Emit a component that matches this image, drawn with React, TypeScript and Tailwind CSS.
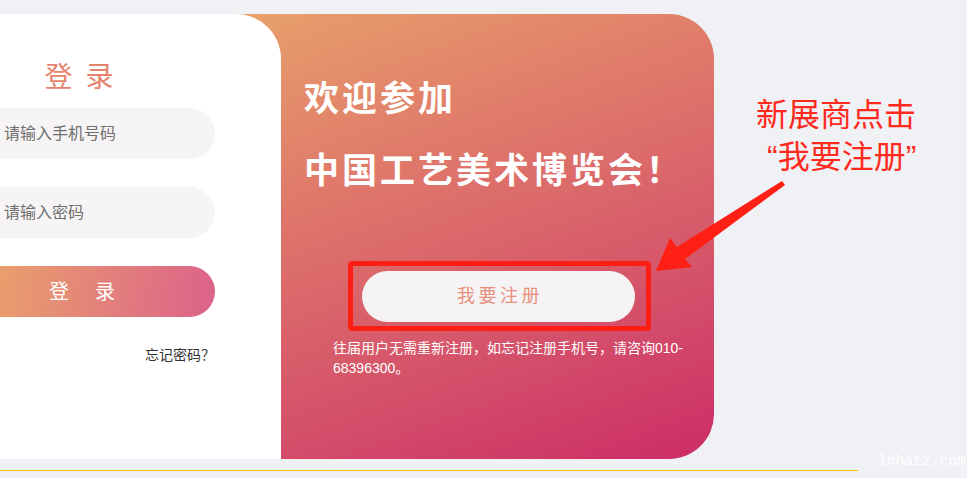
import React from "react";

const LoginForm = () => {
  return (
    <div className="-ml-[51px] w-[266px] pt-[50px]">
      <div className="flex h-[28px] items-center justify-center gap-[13px] pr-[6px] text-[28px] leading-[28px] text-[#e4826c]">
        <span>登</span>
        <span>录</span>
      </div>
      <div className="mt-[16px] flex h-[51px] items-center rounded-r-full bg-[#f6f4f5] pl-[55px] text-[16px] text-[#6f6f6f]">
        请输入手机号码
      </div>
      <div className="mt-[28px] flex h-[51px] items-center rounded-r-full bg-[#f6f4f5] pl-[55px] text-[16px] text-[#6f6f6f]">
        请输入密码
      </div>
      <div className="mt-[28px] flex h-[51px] items-center justify-center gap-[26px] rounded-r-full bg-[linear-gradient(100deg,#edae68_0%,#e89a6f_25%,#dc628a_100%)] text-[20px] text-white">
        <span>登</span>
        <span>录</span>
      </div>
      <div className="mt-[28px] text-right font-['Noto_Sans_CJK_SC',sans-serif] text-[14px] leading-[18px] text-[#333]">
        忘记密码？
      </div>
    </div>
  );
};

const Welcome = () => {
  return (
    <div className="flex-1 pl-[23px] pt-[49px]">
      <div className="text-[35px] font-bold leading-[72px] tracking-[3px] text-white">
        <div>欢迎参加</div>
        <div>中国工艺美术博览会！</div>
      </div>
      <div className="relative ml-[58px] mt-[64px] w-[273px]">
        <div className="flex h-[51px] items-center justify-center rounded-full bg-[#f6f3f5] pl-[3px] text-[18px] tracking-[3.5px] text-[#e7907c]">
          我要注册
        </div>
        <div className="absolute -bottom-[9px] -left-[14px] -right-[16px] -top-[10px] rounded-[4px] border-[5px] border-[#ff1e14]" />
      </div>
      <div className="ml-[29px] mt-[16px] w-[370px] text-[14px] leading-[20px] text-white">
        往届用户无需重新注册，如忘记注册手机号，请咨询010-
        <br />
        68396300。
      </div>
    </div>
  );
};

export default function App() {
  return (
    <div className="relative h-[478px] w-[967px] overflow-hidden bg-[#f0f1f5] font-['Liberation_Sans','Noto_Sans_CJK_SC',sans-serif]">
      <div className="pt-[14px]">
        <div className="flex h-[445px] w-[714px] rounded-r-[45px] bg-[linear-gradient(160deg,#ecb26b_0%,#e5966b_20%,#e07b6a_40%,#d4506a_75%,#cc2c66_100%)]">
          <div className="h-full w-[281px] rounded-tr-[45px] bg-white">
            <LoginForm />
          </div>
          <Welcome />
        </div>
        <div className="mt-[11px] h-px w-[858px] bg-[#ffc600]" />
      </div>

      <div className="absolute left-[756px] top-[94px] text-[32px] leading-[42px] text-[#ff2a1e]">
        <div>新展商点击</div>
        <div className="ml-[11px]">“我要注册”</div>
      </div>

      <svg className="absolute left-0 top-0" width="967" height="478" viewBox="0 0 967 478">
        <polygon
          points="656,271 670,238 677,247 782,181 785,185 685,259 692,267"
          fill="#ff2015"
        />
      </svg>

      <div className="absolute right-[1px] top-[451px] font-['Liberation_Mono',monospace] text-[14.7px] leading-[20px] text-white">
        lnhatz.com
      </div>
    </div>
  );
}
